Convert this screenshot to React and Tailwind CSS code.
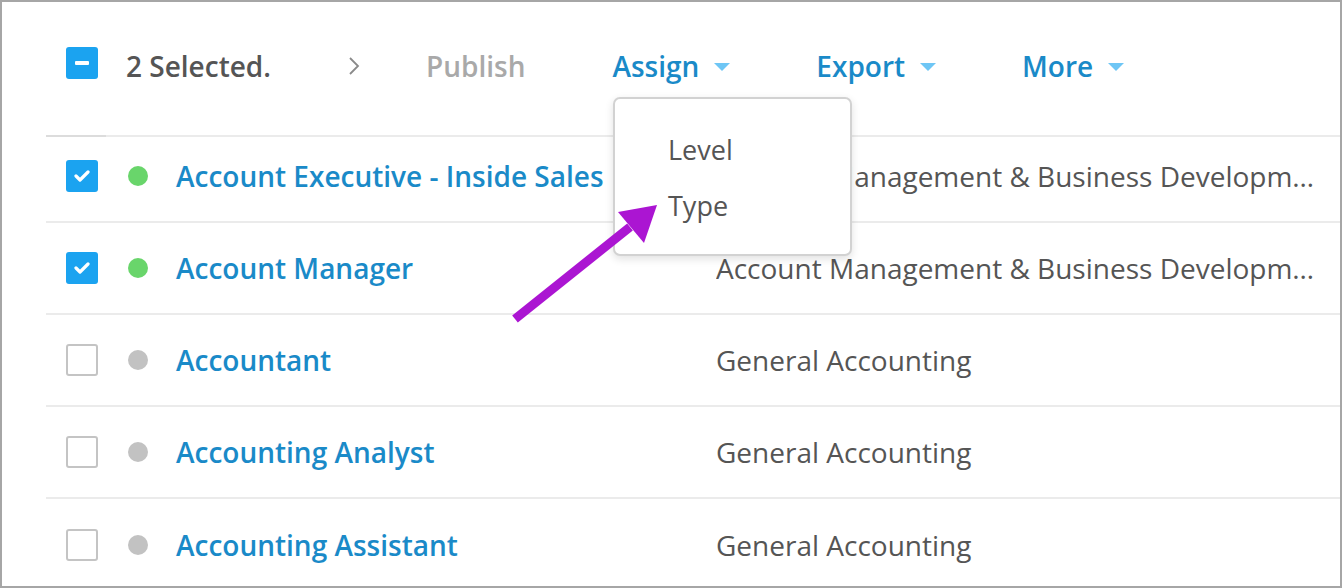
import React from 'react';

const rows = [
  { name: 'Account Executive - Inside Sales', dept: 'Account Management & Business Development', checked: true, active: true },
  { name: 'Account Manager', dept: 'Account Management & Business Development', checked: true, active: true },
  { name: 'Accountant', dept: 'General Accounting', checked: false, active: false },
  { name: 'Accounting Analyst', dept: 'General Accounting', checked: false, active: false },
  { name: 'Accounting Assistant', dept: 'General Accounting', checked: false, active: false },
];

const Caret = () => (
  <svg width="16" height="9" viewBox="0 0 16 9" className="ml-[15px] mt-[3px]">
    <path d="M0 0 L16 0 L8 8 Z" fill="#6ec6f5" />
  </svg>
);

const Checkbox = ({ checked }) =>
  checked ? (
    <div className="w-[32px] h-[32px] rounded-[3px] bg-[#1ba3f0] flex items-center justify-center shrink-0">
      <svg width="16" height="12" viewBox="0 0 16 12">
        <path d="M2 6 L6 10 L14 2" stroke="white" strokeWidth="3.2" fill="none" strokeLinecap="round" strokeLinejoin="round" />
      </svg>
    </div>
  ) : (
    <div className="w-[32px] h-[32px] rounded-[3px] border-2 border-[#c4c4c4] bg-white shrink-0" />
  );

const App = () => {
  return (
    <div
      className="w-[1342px] h-[588px] border-2 border-[#a6a6a6] bg-white relative overflow-hidden"
      style={{ fontFamily: '"Open Sans", "Liberation Sans", sans-serif' }}
    >
      <div className="ml-[44px]">
        {/* barra de acciones */}
        <div className="h-[133px] flex items-center pl-[20px] pb-[6px]">
          <div className="w-[32px] h-[32px] rounded-[3px] bg-[#1ba3f0] flex items-center justify-center -mt-[6px] shrink-0">
            <div className="w-[14px] h-[4px] bg-white rounded-[1px]" />
          </div>
          <span className="ml-[28px] text-[28px] font-semibold text-[#555555]">2 Selected.</span>
          <svg width="12" height="20" viewBox="0 0 12 20" className="ml-[77px]">
            <path d="M2 2 L10 10 L2 18" stroke="#8a8a8a" strokeWidth="1.8" fill="none" />
          </svg>
          <span className="ml-[66px] text-[28px] font-semibold text-[#a9a9a9]">Publish</span>
          <div className="ml-[87px] flex items-center">
            <span className="text-[28px] font-semibold text-[#1a8ac8]">Assign</span>
            <Caret />
          </div>
          <div className="ml-[86px] flex items-center">
            <span className="text-[28px] font-semibold text-[#1a8ac8]">Export</span>
            <Caret />
          </div>
          <div className="ml-[86px] flex items-center">
            <span className="text-[28px] font-semibold text-[#1a8ac8]">More</span>
            <Caret />
          </div>
        </div>
        <div className="flex h-[2px]">
          <div className="w-[60px] bg-[#dcdcdc]" />
          <div className="flex-1 bg-[#ebebeb]" />
        </div>

        {rows.map((r, i) => (
          <div
            key={r.name}
            className={`flex items-center pl-[20px] pr-[24px] ${i === 0 ? 'h-[86px] pb-[6px]' : 'h-[92px]'} ${i < rows.length - 1 ? 'border-b-2 border-[#ebebeb]' : ''}`}
          >
            <Checkbox checked={r.checked} />
            <div className={`ml-[30px] w-[20px] h-[20px] rounded-full shrink-0 ${r.active ? 'bg-[#69d56b]' : 'bg-[#c2c2c2]'}`} />
            <div className="ml-[28px] w-[540px] shrink-0 text-[28px] font-semibold text-[#1a8ac8] whitespace-nowrap">{r.name}</div>
            <div className="flex-1 min-w-0 text-[28px] text-[#555555] whitespace-nowrap overflow-hidden text-ellipsis">{r.dept}</div>
          </div>
        ))}
      </div>

      {/* menú desplegable de Assign */}
      <div className="absolute left-[611px] top-[95px] w-[239px] h-[159px] bg-white border-2 border-[#d2d2d2] rounded-[7px] shadow-[0_3px_8px_rgba(0,0,0,0.12)] pl-[53px] pt-[33px] text-[27px] text-[#555555]">
        <div className="h-[56px] leading-[36px]">Level</div>
        <div className="leading-[36px]">Type</div>
      </div>

      {/* flecha indicadora */}
      <svg className="absolute left-0 top-0 pointer-events-none" width="1342" height="588" viewBox="0 0 1342 588">
        <line x1="513" y1="317" x2="628" y2="225" stroke="#ab15d2" strokeWidth="9" />
        <path d="M655 203 L616 210 L642 241 Z" fill="#ab15d2" />
      </svg>
    </div>
  );
};

export default App;
